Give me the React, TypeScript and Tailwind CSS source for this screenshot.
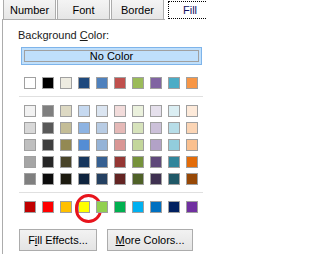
import React from 'react';

const themeRow = ['#ffffff', '#000000', '#eeece1', '#1f497d', '#4f81bd', '#c0504d', '#9bbb59', '#8064a2', '#4bacc6', '#f79646'];

const shades = [
  ['#f2f2f2', '#7f7f7f', '#ddd9c3', '#c6d9f0', '#dbe5f1', '#f2dcdb', '#ebf1dd', '#e5e0ec', '#dbeef3', '#fdeada'],
  ['#d8d8d8', '#595959', '#c4bd97', '#8db3e2', '#b8cce4', '#e5b9b7', '#d7e3bc', '#ccc1d9', '#b7dde8', '#fbd5b5'],
  ['#bfbfbf', '#3f3f3f', '#938953', '#548dd4', '#95b3d7', '#d99694', '#c3d69b', '#b2a2c7', '#92cddc', '#fac08f'],
  ['#a5a5a5', '#262626', '#494429', '#17365d', '#366092', '#953734', '#76923c', '#5f497a', '#31859b', '#e36c09'],
  ['#7f7f7f', '#0c0c0c', '#1d1b10', '#0f243e', '#244061', '#632423', '#4f6128', '#3f3151', '#205867', '#974806'],
];

const standard = ['#c00000', '#ff0000', '#ffc000', '#ffff00', '#92d050', '#00b050', '#00b0f0', '#0070c0', '#002060', '#7030a0'];

const Swatch = ({ color, circled }: { color: string; circled?: boolean }) => (
  <div className="relative w-[12px] h-[12px] border border-[#a0a0a0]" style={{ backgroundColor: color }}>
    {circled && (
      <div className="absolute left-[-4px] top-[-8px] w-[27px] h-[29px] rounded-full border-[3px] border-[#e8141c]" />
    )}
  </div>
);

const Row = ({ colors, circled }: { colors: string[]; circled?: number }) => (
  <div className="flex gap-[6px] ml-[5px]">
    {colors.map((c, i) => (
      <Swatch key={i} color={c} circled={circled === i} />
    ))}
  </div>
);

const Tab = ({ label }: { label: string }) => (
  <div className="shrink-0 w-[53px] h-[19px] flex items-center justify-center pt-[1px] border-x border-[#acacac] bg-linear-to-b from-[#f4f4f4] to-[#e6e6e6] text-black">
    {label}
  </div>
);

const Button = ({ children, width }: { children: React.ReactNode; width: string }) => (
  <div className={`${width} h-[22px] flex items-center justify-center border border-[#acacac] bg-linear-to-b from-[#f2f2f2] to-[#e4e4e4] text-black`}>
    {children}
  </div>
);

export default function App() {
  return (
    <div
      className="w-[206px] h-[254px] overflow-hidden bg-white text-[11px] leading-[15px] text-black"
      style={{ fontFamily: '"Liberation Sans", Arial, sans-serif' }}
    >
      {/* tab strip */}
      <div className="flex gap-[1px] h-[19px] pl-[3px] items-start">
        <Tab label="Number" />
        <Tab label="Font" />
        <Tab label="Border" />
        <div className="relative z-10 w-[50px] h-[20px] bg-white pt-[1px] px-[3px] shrink-0">
          <div className="h-[18px] border border-dotted border-black flex items-center justify-center text-[#101060]">
            Fill
          </div>
        </div>
      </div>

      {/* panel */}
      <div className="ml-[2px] h-[235px] border-l border-t border-[#acacac] pl-[16px] pt-[8px]">
        <div className="-ml-[1px] text-[#1a1a1a]">
          Background <span className="underline">C</span>olor:
        </div>

        <div className="mt-[4px] ml-[2px] w-[181px] h-[18px] border border-[#7eb4ea] bg-[#bfdffb] p-[2px]">
          <div className="h-full border border-[#a0a0a0] flex items-center justify-center">No Color</div>
        </div>

        <div className="mt-[12px]">
          <Row colors={themeRow} />
        </div>

        <div className="mt-[7px] w-[184px] h-[1px] bg-[#e0e0e0]" />

        <div className="mt-[8px] flex flex-col gap-[5px]">
          {shades.map((r, i) => (
            <Row key={i} colors={r} />
          ))}
        </div>

        <div className="mt-[7px] w-[184px] h-[1px] bg-[#e0e0e0]" />

        <div className="mt-[8px]">
          <Row colors={standard} circled={3} />
        </div>

        <div className="mt-[16px] flex gap-[10px]">
          <Button width="w-[78px]">
            <span>
              F<span className="underline">i</span>ll Effects...
            </span>
          </Button>
          <Button width="w-[86px]">
            <span>
              <span className="underline">M</span>ore Colors...
            </span>
          </Button>
        </div>
      </div>
    </div>
  );
}
